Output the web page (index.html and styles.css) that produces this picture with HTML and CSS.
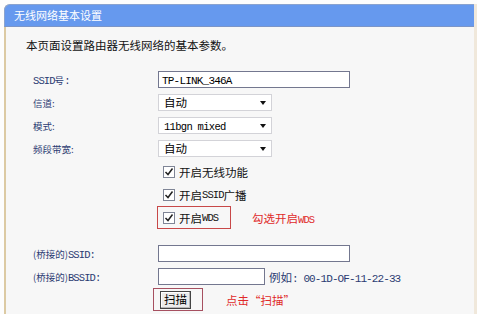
FILE: index.html
```html
<!DOCTYPE html>
<html lang="zh-CN">
<head>
    <meta charset="utf-8">
    <title>无线网络基本设置</title>
    <link rel="stylesheet" href="styles.css">
</head>
<body>
<div class="panel">
    <div class="head">无线网络基本设置</div>
    <p class="intro">本页面设置路由器无线网络的基本参数。</p>

    <div class="form">
        <div class="row">
            <span class="lbl"><span class="en">SSID</span>号<span class="en">:</span></span>
            <div class="input w192"><span class="en">TP-LINK_346A</span></div>
        </div>
        <div class="row">
            <span class="lbl">信道:</span>
            <div class="select">自动</div>
        </div>
        <div class="row">
            <span class="lbl">模式:</span>
            <div class="select"><span class="en">11bgn mixed</span></div>
        </div>
        <div class="row">
            <span class="lbl">频段带宽:</span>
            <div class="select">自动</div>
        </div>

        <!-- 复选框 -->
        <div class="row check">
            <span class="cb"><svg width="10" height="10" viewBox="0 0 10 10"><polyline points="1.5,5 4,7.5 8.5,1.5" fill="none" stroke="#222" stroke-width="1.5"/></svg></span>
            开启无线功能
        </div>
        <div class="row check">
            <span class="cb"><svg width="10" height="10" viewBox="0 0 10 10"><polyline points="1.5,5 4,7.5 8.5,1.5" fill="none" stroke="#222" stroke-width="1.5"/></svg></span>
            开启<span class="en">SSID</span>广播
        </div>
        <div class="row check wds">
            <div class="mark">
                <span class="cb"><svg width="10" height="10" viewBox="0 0 10 10"><polyline points="1.5,5 4,7.5 8.5,1.5" fill="none" stroke="#222" stroke-width="1.5"/></svg></span>
                开启<span class="en">WDS</span>
            </div>
            <span class="note note-wds">勾选开启<span class="en">WDS</span></span>
        </div>

        <!-- 桥接设置 -->
        <div class="row bridge">
            <span class="lbl">(桥接的)<span class="en">SSID:</span></span>
            <div class="input w192"></div>
        </div>
        <div class="row">
            <span class="lbl">(桥接的)<span class="en">BSSID:</span></span>
            <div class="input w107"></div>
            <span class="eg">例如<span class="en">: 00-1D-OF-11-22-33</span></span>
        </div>
        <div class="row">
            <span class="lbl"></span>
            <div class="mark scan">
                <button class="btn">扫描</button>
            </div>
            <span class="note note-scan">点击“扫描”</span>
        </div>
        <div class="row">
            <span class="lbl">密钥类型:</span>
            <div class="select">无加密</div>
        </div>
    </div>
</div>
</body>
</html>
```

FILE: styles.css
```css
* {
    margin: 0;
    padding: 0;
    box-sizing: border-box;
}

body {
    background-color: #fdfdfd;
    font-family: "Noto Sans CJK SC", sans-serif;
    font-size: 11.5px;
    color: #111;
    overflow: hidden;
}

/* 西文部分，宋体那种等宽的样子 */
.en {
    font-family: "Liberation Mono", monospace;
    font-size: 10.5px;
    letter-spacing: -0.9px;
}

/* 外框 */
.panel {
    margin: 4px 0 0 4px;
    height: 340px;
    background-color: #f7f7f7;
    border-left: 2px solid #dccaa3;
    border-right: 3px solid #f0e8db;
    border-top-left-radius: 6px;
}

/* 蓝色标题栏 */
.head {
    height: 23px;
    margin-left: -2px;
    padding-left: 9px;
    background-color: #6699ee;
    border-top: 1px solid #8aa3cf;
    border-bottom: 1px solid #7b95c8;
    border-left: 1px solid #8aa3cf;
    border-top-left-radius: 6px;
    color: #fff;
    font-size: 11px;
    line-height: 21px;
}

.intro {
    margin-top: 9px;
    padding-left: 20px;
    line-height: 18px;
}

.form {
    margin-top: 14px;
    padding-left: 27px;
}

.row {
    display: flex;
    align-items: center;
    height: 23px;
}

.lbl {
    width: 125px;
    flex: none;
    font-size: 9.5px;
    color: #2b3b72;
}

/* 输入框 */
.input {
    height: 17px;
    background-color: #fff;
    border: 1px solid #73778f;
    padding-left: 3px;
    line-height: 15px;
    color: #000;
}

.input .en {
    font-size: 11px;
    letter-spacing: -0.8px;
}

.w192 {
    width: 192px;
}

.w107 {
    width: 107px;
}

/* 下拉框 */
.select {
    position: relative;
    width: 114px;
    height: 17px;
    background-color: #fff;
    border: 1px solid #d3d3d8;
    padding-left: 5px;
    line-height: 15px;
    font-size: 11.5px;
    color: #000;
}

.select .en {
    font-size: 10.5px;
    letter-spacing: -0.7px;
}

.select::after {
    content: "";
    position: absolute;
    right: 5px;
    top: 6px;
    border-left: 3.5px solid transparent;
    border-right: 3.5px solid transparent;
    border-top: 4px solid #111;
}

/* 复选框 */
.check {
    padding-left: 130px;
}

.cb {
    display: flex;
    align-items: center;
    justify-content: center;
    width: 12px;
    height: 12px;
    margin-right: 4px;
    background-color: #fff;
    border: 1px solid #7f8596;
}

.wds {
    padding-left: 124px;
}

/* 红色的标注框 */
.mark {
    display: flex;
    align-items: center;
    width: 74px;
    height: 23px;
    padding-left: 5px;
    border: 1px solid #c84848;
}

.note {
    color: #e02a2a;
}

.note-wds {
    margin-left: 21px;
}

.bridge {
    margin-top: 13px;
}

.eg {
    margin-left: 4px;
    color: #2b3b72;
}

.eg .en {
    font-size: 11px;
    letter-spacing: -0.9px;
}

.scan {
    width: 50px;
    margin-left: -5px;
    padding-left: 6px;
    border-color: #a65060;
}

.btn {
    width: 31px;
    height: 18px;
    background-color: #ececec;
    border: 1px solid #444;
    box-shadow: inset -1px -1px 0 #b8b8b8, inset 1px 1px 0 #fff;
    font-family: "Noto Sans CJK SC", sans-serif;
    font-size: 11.5px;
    line-height: 15px;
    color: #000;
}

.note-scan {
    margin-left: 23px;
}
```
